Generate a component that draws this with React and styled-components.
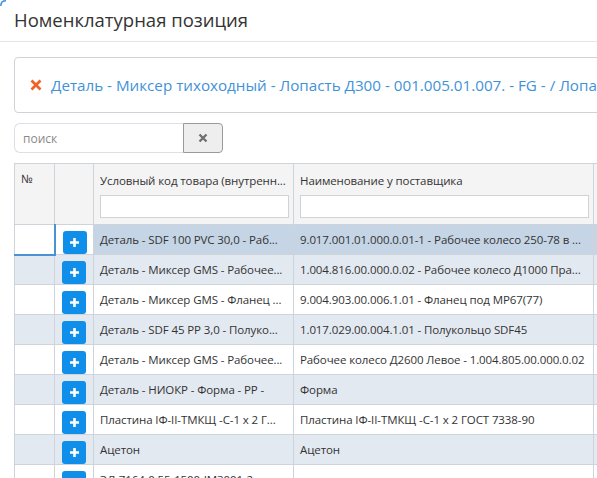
import React from 'react';
import styled, { createGlobalStyle } from 'styled-components';

const GlobalStyle = createGlobalStyle`
  html, body {
    margin: 0;
    padding: 0;
    background: #fff;
    overflow: hidden;
  }
  body {
    font-family: 'Open Sans', 'Noto Sans', sans-serif;
    color: #333;
  }
  * { box-sizing: border-box; }
`;

const Modal = styled.div`
  position: relative;
  width: 597px;
  height: 478px;
  overflow: hidden;
  background: #fff;
`;

const CornerArc = styled.svg`
  position: absolute;
  left: 0;
  top: 0;
`;

const Header = styled.div`
  height: 42px;
  display: flex;
  align-items: center;
  padding: 0 14px 2px;
  border-bottom: 1px solid #e2e4e7;
`;

const Title = styled.h4`
  margin: 0;
  font-size: 18.5px;
  font-weight: 400;
  color: #333;
  white-space: nowrap;
`;

const Body = styled.div`
  padding: 15px 0 0 14px;
`;

const Chip = styled.div`
  width: 720px;
  height: 56px;
  display: flex;
  align-items: center;
  gap: 9px;
  padding-left: 15px;
  border: 1px solid #cfd2d6;
  border-radius: 4px;
  white-space: nowrap;
`;

const ChipRemove = styled.span`
  display: flex;
`;

const ChipText = styled.span`
  color: #3f92d8;
  font-size: 15.2px;
`;

const SearchRow = styled.div`
  display: flex;
  margin-top: 10px;
`;

const SearchInput = styled.input`
  width: 169px;
  height: 30px;
  border: 1px solid #dcdfe3;
  border-right: none;
  border-radius: 6px 0 0 6px;
  padding: 0 8px;
  font-family: inherit;
  font-size: 12px;
  color: #333;
  outline: none;
  &::placeholder { color: #8a8a8a; }
`;

const ClearButton = styled.button`
  width: 40px;
  height: 30px;
  border: 1px solid #9a9a9a;
  border-radius: 0 4px 4px 0;
  background: #eeeeee;
  display: flex;
  align-items: center;
  justify-content: center;
  padding: 0;
`;

const Table = styled.table`
  margin-top: 10px;
  border-collapse: collapse;
  table-layout: fixed;
  width: 700px;
  font-size: 11.5px;
`;

const Th = styled.th`
  height: 61px;
  background: #f4f4f4;
  border: 1px solid #cfd4da;
  vertical-align: top;
  text-align: left;
  font-weight: 400;
  padding: 9px 5px 6px 6px;
  letter-spacing: -0.1px;
  color: #333;
`;

const HeadLabel = styled.div`
  white-space: nowrap;
  overflow: hidden;
  height: 16px;
  line-height: 16px;
  margin-bottom: 6px;
  margin-top: ${p => (p.$num ? '-2px' : '0')};
`;

const FilterInput = styled.input`
  display: block;
  width: calc(100% + 1px);
  height: 23px;
  border: 1px solid #cfd2d6;
  background: #fff;
  outline: none;
`;

const Tr = styled.tr`
  background: ${p => (p.$alt ? '#e3e9f1' : '#fff')};
`;

const Td = styled.td`
  height: 30px;
  border: 1px solid #cfd4da;
  padding: 0 2px 0 6px;
  letter-spacing: -0.1px;
  white-space: nowrap;
  overflow: hidden;
  text-overflow: clip;
  color: #333;
  background: ${p => (p.$selected ? '#c5d5e6' : 'transparent')};
`;

const NumTd = styled(Td)`
  ${p => p.$focused && `
    border-right: 2px solid #4b92d4;
    border-bottom: 2px solid #4b92d4;
  `}
  background: ${p => (p.$alt ? '#e3e9f1' : '#fff')};
`;

const PlusTd = styled(Td)`
  padding: 6px 0 0 7px;
  vertical-align: top;
  background: ${p => (p.$alt ? '#e3e9f1' : '#fff')};
`;

const PlusButton = styled.div`
  width: 24px;
  height: 23px;
  border-radius: 3px;
  background: #0f8fe9;
  display: flex;
  align-items: center;
  justify-content: center;
`;

const rows = [
  ['Деталь - SDF 100 PVC 30,0 - Раб...', '9.017.001.01.000.0.01-1 - Рабочее колесо 250-78 в ...'],
  ['Деталь - Миксер GMS - Рабочее...', '1.004.816.00.000.0.02 - Рабочее колесо Д1000 Пра...'],
  ['Деталь - Миксер GMS - Фланец ...', '9.004.903.00.006.1.01 - Фланец под МР67(77)'],
  ['Деталь - SDF 45 PP 3,0 - Полуко...', '1.017.029.00.004.1.01 - Полукольцо SDF45'],
  ['Деталь - Миксер GMS - Рабочее...', 'Рабочее колесо Д2600 Левое - 1.004.805.00.000.0.02'],
  ['Деталь - НИОКР - Форма - PP -', 'Форма'],
  ['Пластина IФ-II-ТМКЩ -С-1 х 2 Г...', 'Пластина IФ-II-ТМКЩ -С-1 х 2 ГОСТ 7338-90'],
  ['Ацетон', 'Ацетон'],
  ['ЭЛ-7164-0,55-1500-IM3001-2...', ''],
];

function PlusIcon() {
  return (
    <svg width="11" height="11" viewBox="0 0 11 11">
      <path d="M5.5 1v9M1 5.5h9" stroke="#fff" strokeWidth="2.6" />
    </svg>
  );
}

export default function App() {
  return (
    <Modal>
      <GlobalStyle />
      <CornerArc width="8" height="8" viewBox="0 0 8 8">
        <path d="M0.8 6 Q0.8 0.8 6 0.8" fill="none" stroke="#3f8fd8" strokeWidth="1.5" />
      </CornerArc>
      <Header>
        <Title>Номенклатурная позиция</Title>
      </Header>
      <Body>
        <Chip>
          <ChipRemove>
            <svg width="12" height="12" viewBox="0 0 12 12">
              <path d="M1.5 1.5l9 9M10.5 1.5l-9 9" stroke="#ee6428" strokeWidth="2.8" />
            </svg>
          </ChipRemove>
          <ChipText>Деталь - Миксер тихоходный - Лопасть Д300 - 001.005.01.007. - FG - / Лопасть Д300</ChipText>
        </Chip>
        <SearchRow>
          <SearchInput placeholder="поиск" />
          <ClearButton>
            <svg width="10" height="10" viewBox="0 0 10 10">
              <path d="M1.5 1.5l7 7M8.5 1.5l-7 7" stroke="#6f6f6f" strokeWidth="2.3" />
            </svg>
          </ClearButton>
        </SearchRow>
        <Table>
          <colgroup>
            <col style={{ width: 40 }} />
            <col style={{ width: 39 }} />
            <col style={{ width: 200 }} />
            <col style={{ width: 300 }} />
            <col style={{ width: 121 }} />
          </colgroup>
          <thead>
            <tr>
              <Th><HeadLabel $num>№</HeadLabel></Th>
              <Th />
              <Th>
                <HeadLabel>Условный код товара (внутренн...</HeadLabel>
                <FilterInput />
              </Th>
              <Th>
                <HeadLabel>Наименование у поставщика</HeadLabel>
                <FilterInput />
              </Th>
              <Th />
            </tr>
          </thead>
          <tbody>
            {rows.map(([code, name], i) => {
              const alt = i % 2 === 1;
              const selected = i === 0;
              return (
                <Tr key={i} $alt={alt}>
                  <NumTd $alt={alt} $focused={selected} />
                  <PlusTd $alt={alt}>
                    <PlusButton><PlusIcon /></PlusButton>
                  </PlusTd>
                  <Td $selected={selected}>{code}</Td>
                  <Td $selected={selected}>{name}</Td>
                  <Td $selected={selected} />
                </Tr>
              );
            })}
          </tbody>
        </Table>
      </Body>
    </Modal>
  );
}
